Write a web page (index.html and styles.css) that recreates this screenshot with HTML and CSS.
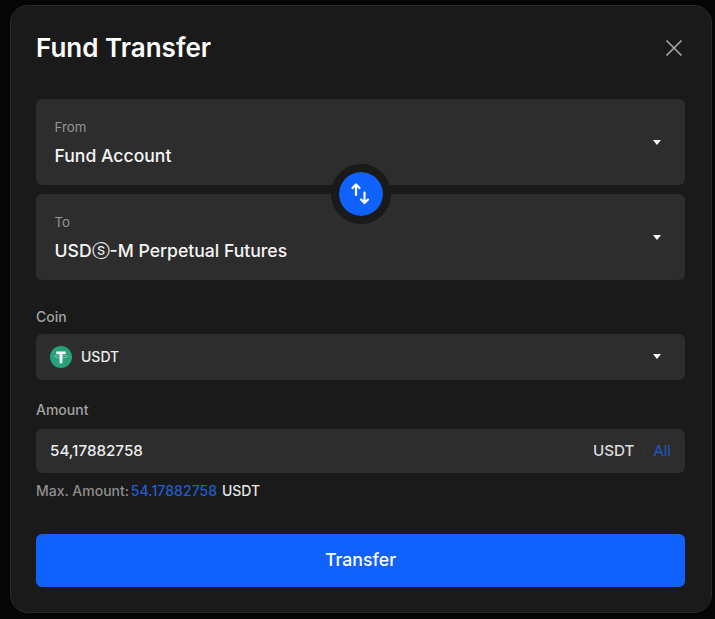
FILE: index.html
```html
<!DOCTYPE html>
<html lang="en">
<head>
<meta charset="utf-8">
<title>Fund Transfer</title>
<link rel="stylesheet" href="styles.css">
</head>
<body>
<main class="modal">
  <header class="modal-head">
    <h1 class="title">Fund Transfer</h1>
    <svg class="close" viewBox="0 0 18 18" aria-label="Close"><path d="M1.5 1.5 16.5 16.5M16.5 1.5 1.5 16.5"/></svg>
  </header>

  <section class="accounts">
    <div class="account">
      <div class="account-text">
        <span class="account-label">From</span>
        <span class="account-value">Fund Account</span>
      </div>
      <span class="caret"></span>
    </div>
    <div class="account">
      <div class="account-text">
        <span class="account-label">To</span>
        <span class="account-value">USDⓢ-M Perpetual Futures</span>
      </div>
      <span class="caret"></span>
    </div>
    <div class="swap">
      <svg viewBox="0 0 24 24"><path d="M7 13V2.6M3.5 6 7 2.4 10.5 6M15.5 10.5v10.4M12 17.5l3.5 3.6 3.5-3.6"/></svg>
    </div>
  </section>

  <div class="field-label coin-label">Coin</div>
  <div class="select">
    <svg class="coin" viewBox="0 0 22 22"><circle cx="11" cy="11" r="11" fill="#26a17b"/><ellipse cx="11" cy="10.4" rx="6.6" ry="1.4" fill="none" stroke="#fff" stroke-opacity=".45" stroke-width=".8"/><path d="M6.3 5.4h9.4v2.5h-3.3v9.4H9.6V7.9H6.3z" fill="#fff"/></svg>
    <span class="coin-name">USDT</span>
    <span class="caret"></span>
  </div>

  <div class="field-label amount-label">Amount</div>
  <div class="amount">
    <span class="amount-value">54,17882758</span>
    <span class="amount-unit">USDT</span>
    <span class="divider"></span>
    <span class="all">All</span>
  </div>
  <p class="max"><span class="max-label">Max. Amount:</span> <span class="max-num">54.17882758</span> <span class="max-unit">USDT</span></p>

  <button class="transfer">Transfer</button>
</main>
</body>
</html>
```

FILE: styles.css
```css
* { box-sizing: border-box; }
html, body { height: 100%; }
body {
  margin: 0;
  background: #050505;
  font-family: Inter, "Noto Sans", "DejaVu Sans", sans-serif;
  color: #fff;
  padding: 5px 3px 6px 10px;
  overflow: hidden;
}
.modal {
  height: 608px;
  background: #1a1a1a;
  border: 1px solid #2a2a2a;
  border-radius: 18px;
  padding: 0 26px 0 25px;
}
.modal-head {
  display: flex;
  align-items: center;
  justify-content: space-between;
  height: 83px;
  padding-top: 1px;
}
.title {
  margin: 0;
  font-size: 26px;
  font-weight: 600;
  line-height: 32px;
  color: #fff;
}
.close {
  width: 18px;
  height: 18px;
  fill: none;
  stroke: #a6a6a6;
  stroke-width: 1.6;
  margin-right: 2px;
}
.accounts {
  position: relative;
  display: flex;
  flex-direction: column;
  gap: 9px;
  margin: 10px 0 0;
}
.account {
  height: 86px;
  background: #2d2d2d;
  border-radius: 6px;
  display: flex;
  align-items: center;
  justify-content: space-between;
  padding: 0 24px 0 18.5px;
}
.account-text { display: flex; flex-direction: column; gap: 9px; margin-top: 3px; }
.account-label { font-size: 13.3px; line-height: 16px; color: #949494; }
.account-value { font-size: 17.6px; line-height: 24px; font-weight: 500; color: #f5f5f5; }
.caret {
  width: 0;
  height: 0;
  border-left: 4.5px solid transparent;
  border-right: 4.5px solid transparent;
  border-top: 5.5px solid #fff;
}
.swap {
  position: absolute;
  left: 295px;
  top: 65px;
  width: 60px;
  height: 60px;
  border-radius: 50%;
  border: 8px solid #1a1a1a;
  display: flex;
  align-items: center;
  justify-content: center;
  background: #0f62fe;
  background-clip: padding-box;
}
.swap svg {
  width: 24px;
  height: 24px;
  fill: none;
  stroke: #fff;
  stroke-width: 2.2;
  stroke-linecap: round;
  stroke-linejoin: round;
}
.field-label { font-size: 14px; line-height: 18px; font-weight: 500; color: #a3a3a3; }
.coin-label { margin-top: 28px; }
.amount-label { margin-top: 21px; }
.select {
  height: 46px;
  margin-top: 8px;
  background: #2d2d2d;
  border-radius: 6px;
  display: flex;
  align-items: center;
  padding: 0 24px 1px 14px;
}
.coin { width: 22px; height: 22px; }
.coin-name { flex: 1; margin-left: 9px; font-size: 14px; font-weight: 500; color: #ececec; }
.amount {
  height: 44px;
  margin-top: 10px;
  background: #2d2d2d;
  border-radius: 6px;
  display: flex;
  align-items: center;
  padding: 0 14px 1px;
}
.amount-value { flex: 1; font-size: 15.2px; font-weight: 500; color: #ececec; }
.amount-unit { font-size: 15.2px; font-weight: 500; color: #dcdcdc; }
.divider { width: 1px; height: 14px; background: #333; margin: 0 9px; }
.all { font-size: 15px; color: #2257c4; }
.max { margin: 9px 0 0; font-size: 14px; line-height: 18px; font-weight: 500; }
.max-label { color: #8f8f8f; }
.max-num { color: #1f5fd0; margin-left: -2px; letter-spacing: .08px; }
.max-unit { color: #e6e6e6; margin-left: 1px; }
.transfer {
  display: block;
  width: 100%;
  height: 53px;
  margin-top: 34px;
  padding: 0 0 2px;
  border: 0;
  border-radius: 6px;
  background: #0f62fe;
  color: #fff;
  font: 500 17.7px Inter, "Noto Sans", sans-serif;
}
```
